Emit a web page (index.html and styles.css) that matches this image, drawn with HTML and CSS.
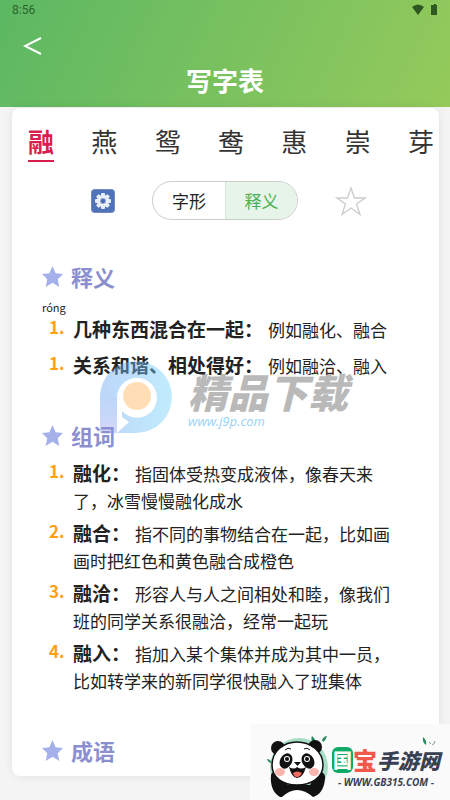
FILE: index.html
```html
<!DOCTYPE html>
<html lang="zh-CN">
<head>
  <meta charset="UTF-8">
  <meta name="viewport" content="width=device-width, initial-scale=1">
  <title>写字表</title>
  <link rel="stylesheet" href="styles.css">
</head>
<body>

  <!-- Header -->
  <header class="header">
    <div class="status">
      <span>8:56</span>
      <svg class="status-icons" width="26" height="12" viewBox="0 0 26 12">
        <path d="M0 3Q6-2 12 3L6 11Z"/>
        <path d="M20 1h2v-1h2v1h1v10h-6v-10z"/>
      </svg>
    </div>
    <button class="back" aria-label="返回">
      <svg width="20" height="20" viewBox="0 0 20 20"><path d="M18 2L2 10L18 18"/></svg>
    </button>
    <h1>写字表</h1>
  </header>

  <main class="card">
    <!-- Characters -->
    <nav class="chars">
      <a class="active" href="#c1">融</a>
      <a href="#c2">燕</a>
      <a href="#c3">鸳</a>
      <a href="#c4">鸯</a>
      <a href="#c5">惠</a>
      <a href="#c6">崇</a>
      <a href="#c7">芽</a>
    </nav>

    <div class="tools">
      <button class="icon-btn" aria-label="设置">
        <svg width="24" height="24" viewBox="0 0 24 24">
          <rect x="0.5" y="0.5" width="23" height="23" rx="3" fill="#4f72b8" stroke="#7189bd"/>
          <g fill="#e9eff8">
            <rect x="10" y="4" width="4" height="16" rx="1"/>
            <rect x="10" y="4" width="4" height="16" rx="1" transform="rotate(45 12 12)"/>
            <rect x="10" y="4" width="4" height="16" rx="1" transform="rotate(90 12 12)"/>
            <rect x="10" y="4" width="4" height="16" rx="1" transform="rotate(135 12 12)"/>
            <circle cx="12" cy="12" r="6"/>
          </g>
          <circle cx="12" cy="12" r="3" fill="#8fa5cf"/>
          <circle cx="12" cy="12" r="2" fill="#4a69ab"/>
        </svg>
      </button>
      <div class="switch">
        <button>字形</button>
        <button class="on">释义</button>
      </div>
      <button class="icon-btn" aria-label="收藏">
        <svg width="32" height="30" viewBox="0 0 32 30"><path d="M16 2L19.500 12H30L21.500 18L25 28.500L16 22L7 28.500L10.500 18L2 12H12.500Z" fill="none" stroke="#ccc" stroke-width="1.300"/></svg>
      </button>
    </div>

    <!-- Meanings -->
    <section class="block">
      <h2><svg class="star" viewBox="0 0 20 20"><path d="M10 0L13 7L20 7.500L15 12.500L16.500 20L10 16L3.500 20L5 12.500L0 7.500L7 7Z"/></svg>释义</h2>
      <p class="pinyin">róng</p>
      <ul class="list">
        <li><span class="num">1.</span><p><b>几种东西混合在一起：</b>例如融化、融合</p></li>
        <li><span class="num">1.</span><p><b>关系和谐、相处得好：</b>例如融洽、融入</p></li>
      </ul>
      <div class="mark">
        <svg class="mark-logo" width="74" height="74" viewBox="0 0 74 74">
          <defs>
            <linearGradient id="blue" x1="0" y1="0" x2="1" y2="0"><stop offset="0" stop-color="#6ba6f2"/><stop offset="1" stop-color="#78d7fb"/></linearGradient>
            <linearGradient id="bar" x1="0" y1="0" x2="0" y2="1"><stop offset="0" stop-color="#6ba6f2"/><stop offset="1" stop-color="#a0a8f2"/></linearGradient>
          </defs>
          <path fill="url(#bar)" d="M0 36H17V72H0Z"/>
          <path fill="url(#blue)" fill-rule="evenodd" d="M0 36A36 36 0 1 1 36 72H17L29 61L22 56V50A20 20 0 1 0 17 36Z"/>
          <circle cx="37" cy="35" r="14" fill="#ffb85c"/>
        </svg>
        <div class="mark-text"><strong>精品下载</strong><span>www.j9p.com</span></div>
      </div>
    </section>

    <!-- Words -->
    <section class="block">
      <h2><svg class="star" viewBox="0 0 20 20"><path d="M10 0L13 7L20 7.500L15 12.500L16.500 20L10 16L3.500 20L5 12.500L0 7.500L7 7Z"/></svg>组词</h2>
      <ul class="list words">
        <li><span class="num">1.</span><p><b>融化：</b>指固体受热变成液体，像春天来了，冰雪慢慢融化成水</p></li>
        <li><span class="num">2.</span><p><b>融合：</b>指不同的事物结合在一起，比如画画时把红色和黄色融合成橙色</p></li>
        <li><span class="num">3.</span><p><b>融洽：</b>形容人与人之间相处和睦，像我们班的同学关系很融洽，经常一起玩</p></li>
        <li><span class="num">4.</span><p><b>融入：</b>指加入某个集体并成为其中一员，比如转学来的新同学很快融入了班集体</p></li>
      </ul>
    </section>

    <section class="block">
      <h2><svg class="star" viewBox="0 0 20 20"><path d="M10 0L13 7L20 7.500L15 12.500L16.500 20L10 16L3.500 20L5 12.500L0 7.500L7 7Z"/></svg>成语</h2>
    </section>
  </main>

  <!-- Site badge -->
  <aside class="badge">
    <svg width="66" height="64" viewBox="0 0 66 64">
      <circle cx="33" cy="32" r="29" fill="#a6dfc6"/>
      <path d="M48 10Q44 4 46 1Q51 5 49 10ZM56 5Q58 1 61 1Q60 5 57 7ZM1 24Q4 24 6 28Q2 28 1 24Z" fill="#268a5c"/>
      <circle cx="12" cy="13" r="7" fill="#111"/>
      <circle cx="49" cy="12" r="7" fill="#111"/>
      <path d="M5 40C6 36 11 36 13 41L22 50H44L50 40C54 34 60 38 59 44C58 54 54 60 47 62H14C7 58 4 50 5 40Z" fill="#111"/>
      <path d="M16 62Q31 48 47 62V64H16Z" fill="#fff"/>
      <path d="M31 7C44 7 57 16 57 30C57 43 45 50 31 50C17 50 6 43 6 30C6 16 18 7 31 7Z" fill="#fff" stroke="#111" stroke-width="1.500"/>
      <path d="M19 15Q22 12 25 14M38 14Q41 12 44 15" fill="none" stroke="#111"/>
      <ellipse cx="20" cy="26" rx="6" ry="8" transform="rotate(28 20 26)" fill="#111"/>
      <ellipse cx="42" cy="26" rx="6" ry="8" transform="rotate(-28 42 26)" fill="#111"/>
      <circle cx="21" cy="24" r="3" fill="#fff"/>
      <circle cx="41" cy="24" r="3" fill="#fff"/>
      <circle cx="21" cy="24" r="2" fill="#111"/>
      <circle cx="41" cy="24" r="2" fill="#111"/>
      <ellipse cx="14" cy="37" rx="5" ry="4" fill="#f9b5ad"/>
      <ellipse cx="48" cy="37" rx="5" ry="4" fill="#f9b5ad"/>
      <path d="M28 27h7l-3.500 4z" fill="#111"/>
      <path d="M23 32Q28 35 31 32Q35 35 40 32Q37 43 31 43Q26 43 23 32Z" fill="#111"/>
      <path d="M27 38Q31 35 36 38Q34 42 31 42Q28 42 27 38Z" fill="#f36b5f"/>
    </svg>
    <div class="badge-text">
      <p class="badge-name"><span class="guo">国</span><span class="bao">宝</span><span class="rest">手游网</span></p>
      <p class="badge-url">- WWW.GB315.COM -</p>
      <svg class="leaf" width="14" height="10" viewBox="0 0 14 10"><path d="M1 0Q5 3 4 8Q0 5 1 0Z" fill="#268a5c"/><path d="M7 5L9 7M13 4Q12 8 10 8" fill="none" stroke="#7b9c8c"/></svg>
    </div>
  </aside>

</body>
</html>
```

FILE: styles.css
```css
* { margin: 0; padding: 0; box-sizing: border-box; }
body {
  font-family: "Noto Sans CJK SC", sans-serif;
  background: #f4f4f4;
  color: #222;
  min-height: 100vh;
}
button {
  border: none;
  background: none;
  font-family: inherit;
  cursor: pointer;
}
a { text-decoration: none; color: inherit; }
svg { display: block; }

.header {
  height: 107px;
  background: linear-gradient(115deg, #5cb863, #95ca5b);
  color: #fff;
}
.status {
  display: flex;
  justify-content: space-between;
  align-items: center;
  height: 20px;
  padding: 0 12px;
  font: 12px Roboto, sans-serif;
  color: #2c642e;
}
.status-icons { fill: #2f5722; }
.back {
  display: block;
  margin: 16px 0 0 23px;
}
.back svg { fill: none; stroke: #fff; stroke-width: 2; }
.header h1 {
  text-align: center;
  font-size: 26px;
  line-height: 36px;
  margin-top: 6px;
}

.card {
  margin: 1px 11px 24px 12px;
  padding-bottom: 10px;
  background: #fff;
  border-radius: 8px;
  box-shadow: 0 0 10px rgba(0,0,0,0.08);
}
.chars {
  display: flex;
  justify-content: space-between;
  padding: 14px 5px 0 16px;
  font-size: 26px;
  line-height: 38px;
  color: #333;
}
.chars .active {
  color: #d81e4e;
  font-weight: bold;
  border-bottom: 2px solid #d81e4e;
}
.tools {
  display: flex;
  justify-content: space-between;
  align-items: center;
  padding: 0 72px 0 79px;
  margin-top: 19px;
}
.switch {
  display: flex;
  border: 1px solid #ccc;
  border-radius: 20px;
  overflow: hidden;
}
.switch button {
  width: 72px;
  height: 37px;
  font-size: 17px;
  color: #222;
}
.switch .on {
  background: #e6f4ea;
  color: #4caf50;
  border-left: 1px solid #d5e5d8;
}

.block {
  position: relative;
  padding: 0 38px 0 30px;
  margin-top: 40px;
}
.block h2 {
  display: flex;
  align-items: center;
  gap: 8px;
  font-size: 22px;
  line-height: 32px;
  color: #8b8fcf;
}
.star { width: 21px; height: 21px; fill: #a5b1eb; }
.pinyin {
  font-size: 11px;
  line-height: 16px;
  margin-top: 7px;
}
.list { list-style: none; }
.list li {
  display: flex;
  margin-bottom: 8px;
}
.num {
  width: 31px;
  padding-left: 7px;
  flex-shrink: 0;
  font-size: 17px;
  line-height: 24px;
  font-weight: bold;
  color: #ffa012;
}
.list p {
  font-size: 17px;
  line-height: 27px;
}
.list b {
  font-size: 19px;
  margin-right: 5px;
}
.words { margin-top: 8px; }
.words li { margin-bottom: 5px; }

.mark {
  position: absolute;
  left: 88px;
  top: 101px;
  display: flex;
  gap: 14px;
  opacity: 0.45;
}
.mark-text {
  display: flex;
  flex-direction: column;
  padding-top: 8px;
}
.mark-text strong {
  font-size: 40px;
  font-style: italic;
  font-weight: 900;
  line-height: 44px;
  color: #666;
}
.mark-text span {
  font: italic 13px "Noto Sans", sans-serif;
  line-height: 16px;
  color: #1ba2f2;
}

.badge {
  position: fixed;
  right: 0;
  bottom: 0;
  display: flex;
  align-items: center;
  padding: 11px 10px 1px 16px;
  background: #fafafa;
}
.badge-text { position: relative; }
.badge-name {
  display: flex;
  align-items: center;
  font-size: 21px;
  font-weight: 900;
  line-height: 30px;
  color: #394052;
}
.badge-name .guo {
  padding: 0 1px;
  background: #0fa968;
  color: #fff;
  border-radius: 6px;
  font-size: 19px;
  line-height: 26px;
}
.badge-name .bao {
  color: #f2594c;
  font-size: 24px;
}
.badge-name .rest { font-style: italic; }
.badge-url {
  font: italic bold 10px "Open Sans", sans-serif;
  text-align: center;
  color: #394052;
}
.leaf {
  position: absolute;
  right: 4px;
  top: -8px;
}
```
